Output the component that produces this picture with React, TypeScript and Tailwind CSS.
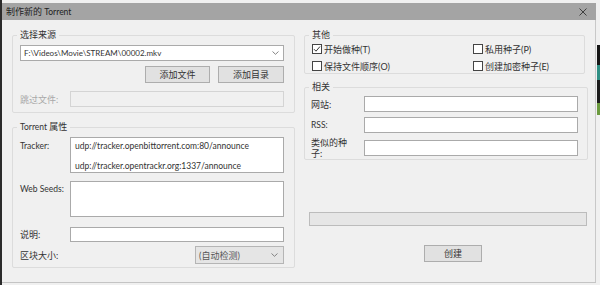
import type { ReactNode } from "react";

function Group({ title, className = "", children }: { title: ReactNode; className?: string; children: ReactNode }) {
  return (
    <fieldset className={`border border-[#dcdcdc] rounded-[2px] min-w-0 ${className}`}>
      <legend className="ml-[4px] px-[3px] text-[9px] leading-[12px] text-[#333]">{title}</legend>
      {children}
    </fieldset>
  );
}

function Chevron() {
  return (
    <svg className="w-[7px] h-[4px] shrink-0" viewBox="0 0 7 4" fill="none" stroke="#777" strokeWidth={0.9}>
      <path d="M0.5 0.5 L3.5 3.3 L6.5 0.5" />
    </svg>
  );
}

function Input({ className = "", disabled = false, children }: { className?: string; disabled?: boolean; children?: ReactNode }) {
  return (
    <div
      className={`border ${
        disabled ? "border-[#d4d4d4] bg-[#f0f0f0]" : "border-[#aaaaaa] bg-white"
      } ${className}`}
    >
      {children}
    </div>
  );
}

function Button({ label, className = "" }: { label: string; className?: string }) {
  return (
    <div
      className={`flex items-center justify-center border border-[#adadad] bg-[#e1e1e1] text-[9px] leading-none text-[#333] ${className}`}
    >
      {label}
    </div>
  );
}

function Check({ label, checked = false }: { label: string; checked?: boolean }) {
  return (
    <div className="flex items-center gap-[2px] h-[14px]">
      <div className="w-[10px] h-[10px] border border-[#444] bg-white flex items-center justify-center">
        {checked && (
          <svg className="w-[8px] h-[8px]" viewBox="0 0 8 8" fill="none" stroke="#333" strokeWidth={1}>
            <path d="M1 4.2 L3 6.2 L7 1.5" />
          </svg>
        )}
      </div>
      <span className="text-[9px] leading-none">{label}</span>
    </div>
  );
}

export default function App() {
  return (
    <div className="relative w-[600px] h-[285px] overflow-hidden bg-[#f0f0f0] font-['Lato','Noto_Sans_CJK_SC',sans-serif] text-[#333]">
      {/* window frame */}
      <div className="absolute left-0 top-0 bottom-0 w-[2px] bg-[#2b2b2b]" />
      <div className="absolute right-[4px] top-[20px] bottom-[2px] w-px bg-[#c8c8c8]" />
      <div className="absolute right-0 top-[45px] w-[3px] h-[20px] bg-[#151515]" />
      <div className="absolute right-0 top-[65px] w-[3px] h-[15px] bg-[#2f8f84]" />
      <div className="absolute right-0 top-[80px] w-[3px] h-[23px] bg-[#1c1c1c]" />
      <div className="absolute right-0 top-[103px] w-[3px] h-[12px] bg-[#6b9a3e]" />
      <div className="absolute left-[2px] right-[4px] bottom-[2px] h-px bg-[#c4c4c4]" />

      {/* title bar */}
      <div className="ml-[2px] mr-[4px] mt-[3px] h-[17px] bg-[#a4a4a4] flex items-center justify-between pl-[4px] pr-[9px]">
        <span className="text-[9px] leading-none text-[#222]">
          制作新的 <span className="text-[8.5px]">Torrent</span>
        </span>
        <svg className="w-[8px] h-[8px]" viewBox="0 0 8 8" stroke="#333" strokeWidth={0.9}>
          <path d="M0.5 0.5 L7.5 7.5 M7.5 0.5 L0.5 7.5" />
        </svg>
      </div>

      <div className="flex gap-[9px] pl-[12px] pt-[9px]">
        {/* left column */}
        <div className="w-[283px] flex flex-col">
          <Group title="选择来源">
            <div className="pl-[7px] pr-[10px] pt-[4px] pb-[5px]">
              <Input className="h-[16px] flex items-center justify-between pl-[3px] pr-[4px]">
                <span className="text-[8px] leading-none">F:\Videos\Movie\STREAM\00002.mkv</span>
                <Chevron />
              </Input>
              <div className="flex justify-end gap-[8px] mt-[5px]">
                <Button label="添加文件" className="w-[65px] h-[17px]" />
                <Button label="添加目录" className="w-[66px] h-[17px]" />
              </div>
              <div className="flex items-center mt-[8px]">
                <span className="w-[50px] text-[9px] leading-none text-[#a8a8a8]">跳过文件:</span>
                <Input disabled className="flex-1 h-[16px]" />
              </div>
            </div>
          </Group>

          <Group
            title={
              <>
                <span className="text-[8.5px]">Torrent</span> 属性
              </>
            }
            className="mt-[8px]"
          >
            <div className="pl-[7px] pr-[10px] pt-[4px] pb-[3px]">
              <div className="flex">
                <span className="w-[50px] pt-[5px] text-[8.5px] leading-none">Tracker:</span>
                <Input className="flex-1 h-[36px] pl-[4px] pt-[3px] flex flex-col gap-[10px] text-[8.5px] leading-[10px]">
                  <span>udp://tracker.openbittorrent.com:80/announce</span>
                  <span>udp://tracker.opentrackr.org:1337/announce</span>
                </Input>
              </div>
              <div className="flex mt-[8px]">
                <span className="w-[50px] pt-[4px] text-[8.5px] leading-none">Web Seeds:</span>
                <Input className="flex-1 h-[36px]" />
              </div>
              <div className="flex items-center mt-[10px]">
                <span className="w-[50px] text-[9px] leading-none">说明:</span>
                <Input className="flex-1 h-[15px]" />
              </div>
              <div className="flex items-center justify-between mt-[4px]">
                <span className="text-[9px] leading-none">区块大小:</span>
                <div className="w-[89px] h-[18px] border border-[#b5b5b5] bg-[#e5e5e5] flex items-center justify-between pl-[3px] pr-[5px]">
                  <span className="text-[9px] leading-none text-[#555]">(自动检测)</span>
                  <Chevron />
                </div>
              </div>
            </div>
          </Group>
        </div>

        {/* right column */}
        <div className="w-[284px] flex flex-col">
          <Group title="其他" className="mr-[3px]">
            <div className="grid grid-cols-[161px_1fr] gap-y-[3px] pl-[7px] pt-[1px] pb-0">
              <Check label="开始做种(T)" checked />
              <Check label="私用种子(P)" />
              <Check label="保持文件顺序(O)" />
              <Check label="创建加密种子(E)" />
            </div>
          </Group>

          <Group title="相关" className="mt-[7px]">
            <div className="pl-[6px] pr-[9px] pt-[3px] pb-0">
              <div className="flex items-center">
                <span className="w-[53px] text-[9px] leading-none">网站:</span>
                <Input className="flex-1 h-[16px]" />
              </div>
              <div className="flex items-center mt-[5px]">
                <span className="w-[53px] text-[8.5px] leading-none">RSS:</span>
                <Input className="flex-1 h-[16px]" />
              </div>
              <div className="flex items-center mt-[4px]">
                <span className="w-[53px] text-[9px] leading-[11px]">
                  类似的种
                  <br />
                  子:
                </span>
                <Input className="flex-1 h-[16px]" />
              </div>
            </div>
          </Group>

          <div className="ml-[5px] mr-[1px] mt-[52px] h-[14px] border border-[#bcbcbc] bg-[#e6e6e6]" />

          <Button label="创建" className="ml-[120px] mt-[19px] w-[58px] h-[17px]" />
        </div>
      </div>
    </div>
  );
}
